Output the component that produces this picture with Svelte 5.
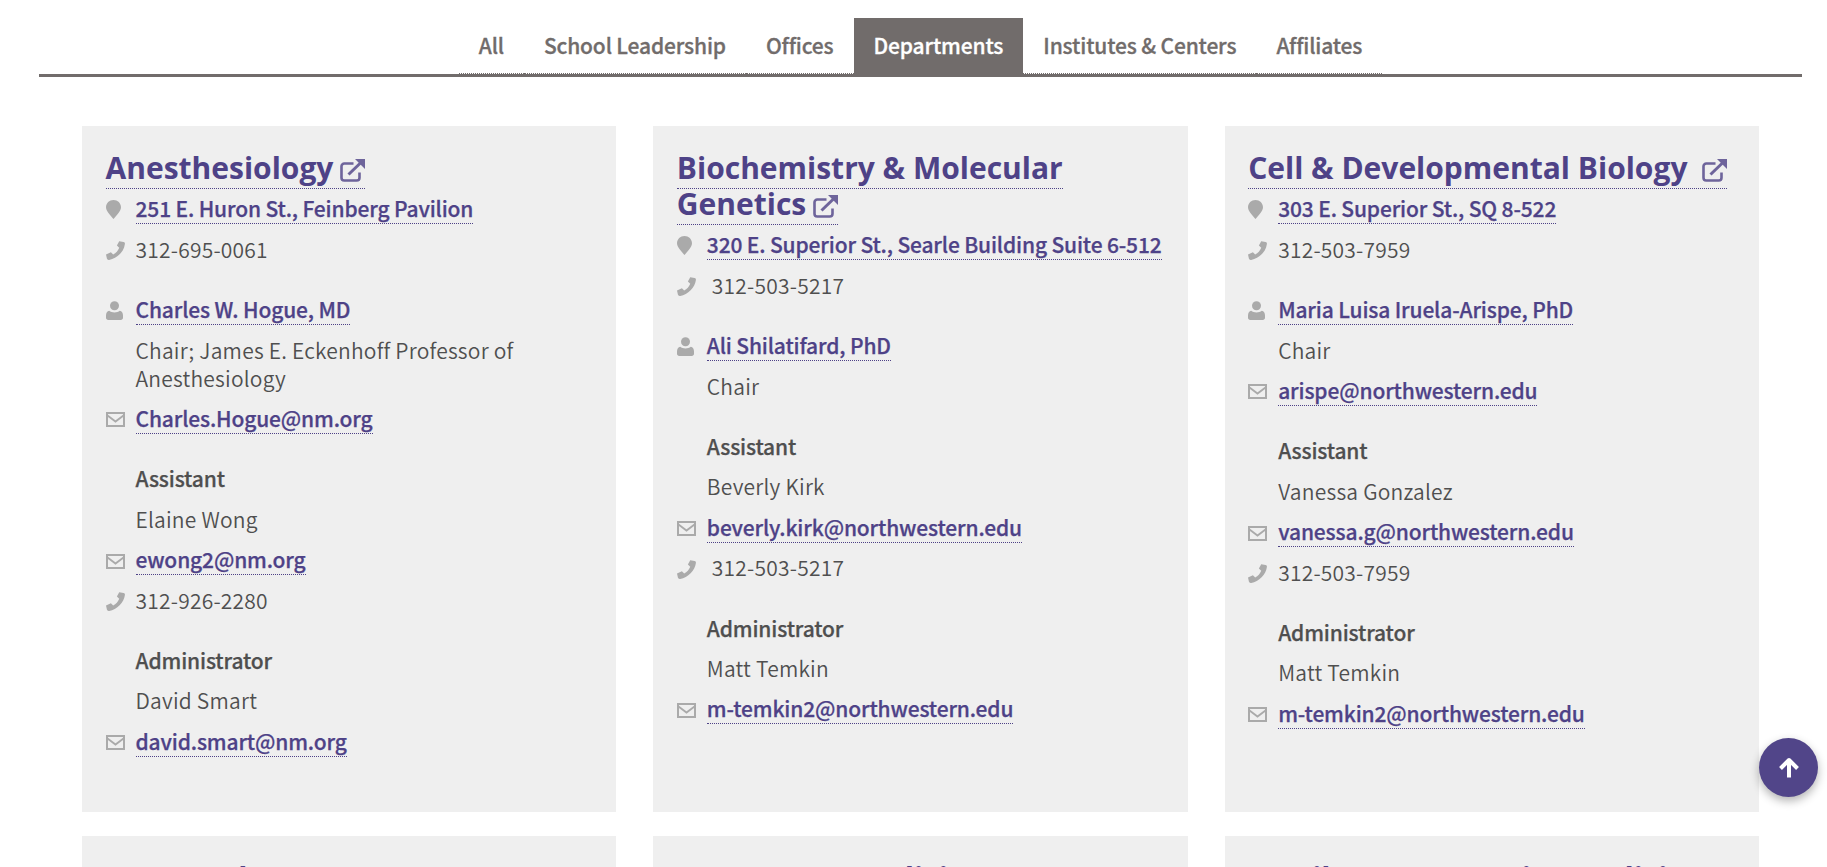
<script lang="ts">
	const tabs = ['All', 'School Leadership', 'Offices', 'Departments', 'Institutes & Centers', 'Affiliates'];

	type Row = { icon?: string; text: string; link?: boolean; label?: boolean; indent?: boolean };

	const cards: { title: string; gap?: boolean; groups: Row[][] }[] = [
		{
			title: 'Anesthesiology',
			groups: [
				[
					{ icon: 'pin', text: '251 E. Huron St., Feinberg Pavilion', link: true },
					{ icon: 'phone', text: '312-695-0061' }
				],
				[
					{ icon: 'user', text: 'Charles W. Hogue, MD', link: true },
					{ text: 'Chair; James E. Eckenhoff Professor of Anesthesiology' },
					{ icon: 'mail', text: 'Charles.Hogue@nm.org', link: true }
				],
				[
					{ text: 'Assistant', label: true },
					{ text: 'Elaine Wong' },
					{ icon: 'mail', text: 'ewong2@nm.org', link: true },
					{ icon: 'phone', text: '312-926-2280' }
				],
				[
					{ text: 'Administrator', label: true },
					{ text: 'David Smart' },
					{ icon: 'mail', text: 'david.smart@nm.org', link: true }
				]
			]
		},
		{
			title: 'Biochemistry & Molecular Genetics',
			groups: [
				[
					{ icon: 'pin', text: '320 E. Superior St., Searle Building Suite 6-512', link: true },
					{ icon: 'phone', text: '312-503-5217', indent: true }
				],
				[
					{ icon: 'user', text: 'Ali Shilatifard, PhD', link: true },
					{ text: 'Chair' }
				],
				[
					{ text: 'Assistant', label: true },
					{ text: 'Beverly Kirk' },
					{ icon: 'mail', text: 'beverly.kirk@northwestern.edu', link: true },
					{ icon: 'phone', text: '312-503-5217', indent: true }
				],
				[
					{ text: 'Administrator', label: true },
					{ text: 'Matt Temkin' },
					{ icon: 'mail', text: 'm-temkin2@northwestern.edu', link: true }
				]
			]
		},
		{
			title: 'Cell & Developmental Biology',
			gap: true,
			groups: [
				[
					{ icon: 'pin', text: '303 E. Superior St., SQ 8-522', link: true },
					{ icon: 'phone', text: '312-503-7959' }
				],
				[
					{ icon: 'user', text: 'Maria Luisa Iruela-Arispe, PhD', link: true },
					{ text: 'Chair' },
					{ icon: 'mail', text: 'arispe@northwestern.edu', link: true }
				],
				[
					{ text: 'Assistant', label: true },
					{ text: 'Vanessa Gonzalez' },
					{ icon: 'mail', text: 'vanessa.g@northwestern.edu', link: true },
					{ icon: 'phone', text: '312-503-7959' }
				],
				[
					{ text: 'Administrator', label: true },
					{ text: 'Matt Temkin' },
					{ icon: 'mail', text: 'm-temkin2@northwestern.edu', link: true }
				]
			]
		},
		{ title: 'Dermatology', groups: [] },
		{ title: 'Emergency Medicine', groups: [] },
		{ title: 'Family & Community Medicine', groups: [] }
	];
</script>

{#snippet rowIcon(name: string)}
	{#if name === 'pin'}
		<svg class="ico pin" viewBox="0 0 15 19" aria-hidden="true">
			<path d="M7.5 0C3.3 0 0 3.2 0 7.2c0 3.6 4.6 8.6 7.5 11.8C10.4 15.8 15 10.8 15 7.2 15 3.2 11.7 0 7.5 0Z" />
		</svg>
	{:else if name === 'phone'}
		<svg class="ico phone" viewBox="0 0 19 19" aria-hidden="true">
			<path d="M13.2 0.2 17.6 1c1 .2 1.4.9 1.3 2C18 10.800 11 17.500 3.200 18.900c-1.200.2-2-.2-2.300-1.300L0 13.600l4.900-2.400 2.300 2.200c2.800-1.400 4.900-3.700 6-6.700L10.900 4.600Z" />
		</svg>
	{:else if name === 'user'}
		<svg class="ico user" viewBox="0 0 17 19" aria-hidden="true">
			<circle cx="8.500" cy="4.700" r="4.500" />
			<path d="M3.200 9.800C4.500 10.900 6.400 11.400 8.500 11.400s4-.5 5.300-1.600C15.800 10.300 17 12 17 14.500v2.300c0 1.300-1 2.200-2.200 2.200H2.200C1 19 0 18.100 0 16.800v-2.300C0 12 1.200 10.300 3.200 9.800Z" />
		</svg>
	{:else}
		<svg class="ico mail" viewBox="0 0 19 15" aria-hidden="true">
			<rect x="1" y="1" width="17" height="13" fill="none" stroke-width="2" />
			<path d="M1.500 3.500 9.500 9.500 17.500 3.500" fill="none" stroke-width="1.800" />
		</svg>
	{/if}
{/snippet}

<div class="page">
	<nav class="tabs">
		<ul>
			{#each tabs as tab}
				<li class:active={tab === 'Departments'}>{tab}</li>
			{/each}
		</ul>
	</nav>

	<div class="grid">
		{#each cards as card}
			<section class="card">
				<h2>
					<a href="#top" class:wide={card.gap}>{card.title}<svg class="ext" viewBox="0 0 25 23" aria-hidden="true">
							<path d="M19.500 13.500v5.200a2.800 2.800 0 0 1-2.800 2.800H4.300a2.800 2.800 0 0 1-2.800-2.800V7.300a2.800 2.800 0 0 1 2.800-2.800h9.200" fill="none" stroke="currentColor" stroke-width="2.600" />
							<path d="M8.500 15.500 22 2.500" fill="none" stroke="currentColor" stroke-width="3" />
							<path d="M15 0h10v10Z" fill="currentColor" />
						</svg></a>
				</h2>
				{#each card.groups as group}
					<div class="group">
						{#each group as row}
							<div class="row" class:label={row.label}>
								<span class="slot">
									{#if row.icon}{@render rowIcon(row.icon)}{/if}
								</span>
								<span class="body" class:indent={row.indent}>
									{#if row.link}<a href="#top">{row.text}</a>{:else}{row.text}{/if}
								</span>
							</div>
						{/each}
					</div>
				{/each}
			</section>
		{/each}
	</div>
</div>

<button class="to-top" type="button" aria-label="Back to top">
	<svg viewBox="0 0 22 22" aria-hidden="true">
		<path d="M11 20.500V3.500M2.500 11.500 11 3l8.500 8.500" fill="none" stroke="#fff" stroke-width="4" stroke-linejoin="round" />
	</svg>
</button>

<style>
	:global(html),
	:global(body) {
		height: 867px;
		overflow: hidden;
		background: #fff;
	}

	.page {
		width: 1763px;
		margin-left: 39px;
		font-family: 'Noto Sans CJK SC', 'Noto Sans', sans-serif;
		font-size: 21px;
		font-weight: 350;
		letter-spacing: 0.22px;
		color: #4f4f4f;
	}

	.tabs {
		padding-top: 18px;
		border-bottom: 3px solid #716c6b;
	}

	.tabs ul {
		display: flex;
		justify-content: center;
		margin: 0;
		padding: 0;
		list-style: none;
	}

	.tabs li {
		height: 56px;
		padding: 0 20px;
		border-bottom: 1px dotted #716c6b;
		box-sizing: border-box;
		line-height: 54px;
		font-weight: 500;
		letter-spacing: -0.15px;
		-webkit-text-stroke: 0.3px currentColor;
		color: #716c6b;
	}

	.tabs li.active {
		background: #716c6b;
		color: #fff;
	}

	.grid {
		display: grid;
		grid-template-columns: repeat(3, 1fr);
		gap: 24px 37px;
		padding: 49px 43px 0;
	}

	.card {
		padding: 24px 24px 57px 23.5px;
		background: #efefef;
	}

	.card a {
		color: #4e4287;
		text-decoration: none;
		border-bottom: 1px dotted #4e4287;
	}

	h2 {
		margin: 0 0 -4px;
		font-family: 'Open Sans', sans-serif;
		font-size: 30px;
		font-weight: 700;
		line-height: 36px;
		letter-spacing: 0;
		color: #4e4287;
	}

	.ext {
		display: inline-block;
		width: 25px;
		height: 23px;
		margin-left: 6.5px;
		vertical-align: -3px;
		opacity: 0.8;
	}

	.wide .ext {
		margin-left: 15px;
	}

	.group + .group {
		margin-top: 32.4px;
	}

	.row {
		display: flex;
		margin-top: 12.4px;
		line-height: 28px;
	}

	.slot {
		flex: 0 0 30px;
		display: flex;
		align-items: center;
		height: 28px;
	}

	.body {
		flex: 1;
		min-width: 0;
	}

	.body.indent {
		padding-left: 5px;
	}

	.body a,
	.label .body {
		font-weight: 500;
		letter-spacing: -0.15px;
		-webkit-text-stroke: 0.25px currentColor;
	}

	.ico {
		display: block;
		fill: #aaa;
		stroke: #aaa;
		stroke-width: 0;
	}

	.pin {
		width: 15px;
		height: 19px;
		margin-top: 2px;
	}

	.phone {
		width: 19px;
		height: 19px;
		margin-top: 4px;
	}

	.user {
		width: 17px;
		height: 19px;
		margin-top: 2px;
	}

	.mail {
		width: 19px;
		height: 15px;
		margin-top: 4px;
	}

	.to-top {
		position: fixed;
		left: 1759px;
		top: 738px;
		display: grid;
		place-items: center;
		width: 59px;
		height: 59px;
		padding: 0;
		border: 0;
		border-radius: 50%;
		background: #514589;
		box-shadow: 0 4px 10px rgba(0, 0, 0, 0.3);
	}

	.to-top svg {
		width: 22px;
		height: 22px;
	}
</style>
